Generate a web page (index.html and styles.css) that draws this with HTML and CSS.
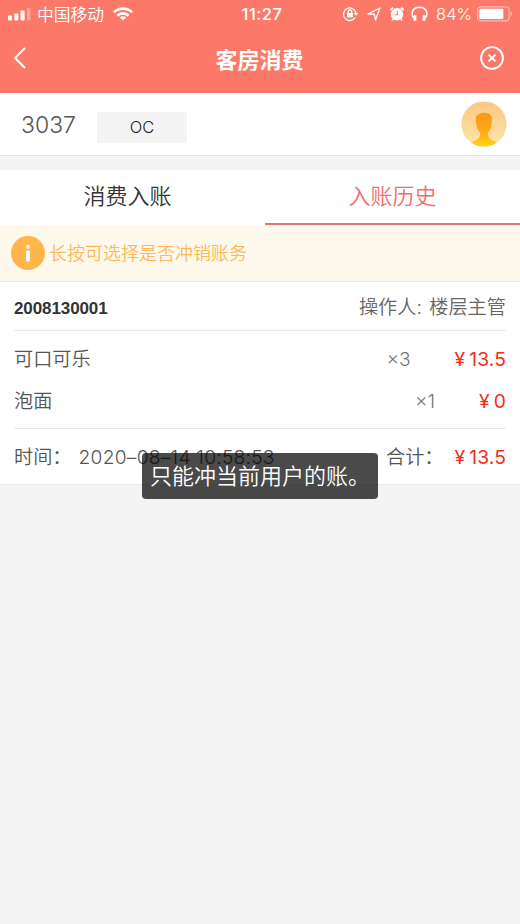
FILE: index.html
```html
<!DOCTYPE html>
<html lang="zh-CN">
<head>
<meta charset="utf-8">
<title>客房消费</title>
<link rel="stylesheet" href="styles.css">
</head>
<body>
<header class="header">
  <div class="status">
    <div class="status-left">
      <svg class="signal" width="23" height="14" viewBox="0 0 23 14" fill="#fff"><rect x="0" y="8.5" width="4" height="5" rx="1"/><rect x="6.3" y="6.5" width="4" height="7" rx="1"/><rect x="12.6" y="3.5" width="4" height="10" rx="1"/><rect x="19" y="1" width="3.5" height="12.5" rx="1" opacity=".35"/></svg>
      <span class="carrier">中国移动</span>
      <svg class="wifi" width="20" height="14" viewBox="0 0 20 14" fill="none" stroke="#fff" stroke-width="2.7"><path d="M1 5.2C6 .3 14 .3 19 5.2"/><path d="M4.4 8.7C7.5 5.7 12.5 5.7 15.6 8.7"/><path d="M10 13.6 6.8 10.5Q10 8 13.2 10.5Z" fill="#fff" stroke="none"/></svg>
    </div>
    <span class="clock">11:27</span>
    <div class="status-right">
      <svg width="17" height="16" viewBox="0 0 17 16" fill="none" stroke="#fff" stroke-width="1.3"><path d="M13.2 11.5A6.3 6.3 0 1 1 14 7"/><path d="M11.5 7h5L14 9.8Z" fill="#fff" stroke="none"/><rect x="5" y="7" width="6" height="4.4" fill="#fff" stroke="none"/><path d="M6.2 7V5.8a1.8 1.8 0 0 1 3.6 0V7"/></svg>
      <svg class="arrow" width="14" height="14" viewBox="0 0 14 14" fill="none" stroke="#fff" stroke-width="1.3" stroke-linejoin="round"><path d="M1 7 13 1 8.5 13 7.2 7.2Z"/></svg>
      <svg class="alarm" width="16" height="16" viewBox="0 0 16 16"><circle cx="8" cy="8.3" r="6.2" fill="#fff"/><path d="M1.5 4 4 1.8M14.5 4 12 1.8" stroke="#fff" stroke-width="2"/><path d="M4 12.8 3 14.5M12 12.8l1 1.7" stroke="#fff" stroke-width="1.3"/><path d="M8.3 4.8v3.9H5.3" fill="none" stroke="#fc7767" stroke-width="1.1"/></svg>
      <svg class="phones" width="17" height="16" viewBox="0 0 17 16" fill="none" stroke="#fff" stroke-width="1.5"><path d="M2.4 12C-1 5.5 3 1.3 8.5 1.3S18 5.5 14.6 12"/><path d="M4 9.2v5.5M13 9.2v5.5" stroke-width="2.8"/></svg>
      <span class="percent">84%</span>
      <svg width="36" height="16" viewBox="0 0 36 16"><rect x=".6" y=".8" width="31.5" height="14" rx="3" fill="none" stroke="#fff" stroke-opacity=".5" stroke-width="1.2"/><rect x="2.3" y="2.7" width="24" height="10.3" rx="1" fill="#fff"/><path d="M33.5 5.3q3 2.5 0 5Z" fill="#fff" opacity=".5"/></svg>
    </div>
  </div>
  <div class="nav">
    <svg class="back" width="14" height="22" viewBox="0 0 14 22" fill="none" stroke="#fff" stroke-width="2"><path d="M12 1 2 11l10 10"/></svg>
    <h1>客房消费</h1>
    <svg class="close" width="24" height="24" viewBox="0 0 24 24" fill="none" stroke="#fff"><circle cx="12" cy="12" r="10.9" stroke-width="1.9"/><path d="m8.6 8.6 6.8 6.8m0-6.8-6.8 6.8" stroke-width="2"/></svg>
  </div>
</header>

<section class="room">
  <span class="number">3037</span>
  <span class="state">OC</span>
  <svg class="avatar" width="46" height="46" viewBox="0 0 46 46">
    <defs>
      <linearGradient id="bg" x1="0" y1="0" x2="0" y2="1"><stop stop-color="#fac882"/><stop offset="1" stop-color="#fde5ad"/></linearGradient>
      <linearGradient id="person" x1="0" y1="0" x2="0" y2="1"><stop stop-color="#ff9518"/><stop offset=".6" stop-color="#ffad15"/><stop offset="1" stop-color="#ffdc17"/></linearGradient>
      <clipPath id="round"><circle cx="23" cy="23" r="22.6"/></clipPath>
    </defs>
    <circle cx="23" cy="23" r="22.6" fill="url(#bg)"/>
    <path clip-path="url(#round)" d="M15 20c-1-4 .5-6 2.500-6.500C20 11 27 11 29.500 14 31.500 16 31 20 30.500 23.500c-.3 3.500-1.500 6-3.500 8-.8 4 1.500 6.500 4 7.800 2.500 1 4 2 5 3.700V47H10v-4c1-1.700 2.500-2.700 5-3.700 2.500-1.300 5-3.800 4-7.800-2-2-4-5.500-4-11.500Z" fill="url(#person)"/>
  </svg>
</section>

<nav class="tabs">
  <span class="tab">消费入账</span>
  <span class="tab active">入账历史</span>
</nav>

<div class="notice">
  <svg width="34" height="34" viewBox="0 0 34 34"><circle cx="17" cy="17" r="17" fill="#ffb74b"/><circle cx="17" cy="10.800" r="2" fill="#fff"/><rect x="15.100" y="14.500" width="3.800" height="11" rx="1" fill="#fff"/></svg>
  <span class="notice-text">长按可选择是否冲销账务</span>
</div>

<main class="bill">
  <div class="row bill-head"><span class="order">2008130001</span><span class="operator">操作人: 楼层主管</span></div>
  <div class="items">
    <div class="row item"><span>可口可乐</span><span class="qty">×3</span><span class="price"><i>¥</i>13.5</span></div>
    <div class="row item"><span>泡面</span><span class="qty">×1</span><span class="price"><i>¥</i>0</span></div>
  </div>
  <div class="row bill-foot"><span>时间：</span><span class="time">2020–08–14 10:58:53</span><span class="sum">合计：</span><span class="price"><i>¥</i>13.5</span></div>
</main>

<div class="toast">只能冲当前用户的账。</div>
</body>
</html>
```
FILE: styles.css
```css
* { box-sizing: border-box; }
body {
  margin: 0;
  height: 924px;
  overflow: hidden;
  background: #f4f4f4;
  color: #555;
  font: 350 19.2px/28px Inter, "Noto Sans CJK SC", sans-serif;
}
svg { display: block; flex: none; }
span { white-space: nowrap; }

.header { height: 93px; background: #fc7969; color: #fff; }
.status {
  display: grid;
  grid-template-columns: 1fr auto 1fr;
  align-items: center;
  height: 28px;
  padding: 0 7px 0 8px;
}
.status-left, .status-right { display: flex; align-items: center; }
.status-right { justify-content: flex-end; }
.carrier { margin: 2px 0 0 6px; font-size: 16.8px; line-height: 26px; }
.wifi { margin-left: 9px; }
.clock { margin-left: 3px; font-size: 16.5px; font-weight: 500; letter-spacing: .5px; }
.arrow { margin-left: 8px; }
.alarm { margin-left: 8px; }
.phones { margin-left: 6px; }
.percent { margin: 0 5px 0 8px; font-size: 16.5px; }
.nav {
  display: grid;
  grid-template-columns: 1fr auto 1fr;
  align-items: center;
  height: 60px;
  padding: 0 16px 0 13px;
}
.nav h1 { margin: 3px -1px 0 1px; font-size: 22px; font-weight: 700; line-height: 32px; }
.close { justify-self: end; }

.room {
  display: flex;
  align-items: center;
  height: 63px;
  padding: 0 13px 0 21px;
  background: #fff;
  border-bottom: 1px solid #e3e3e3;
}
.number { width: 76px; padding-top: 1px; font-size: 23px; }
.state {
  width: 90px;
  height: 31px;
  margin-top: 6px;
  background: #f4f4f4;
  color: #222;
  font-size: 16.5px;
  line-height: 31px;
  text-align: center;
}
.avatar { margin-left: auto; }

.tabs {
  display: flex;
  gap: 10px;
  height: 55px;
  margin-top: 14px;
  background: #fff;
}
.tab { flex: 1; color: #333; font-size: 22px; line-height: 53px; text-align: center; }
.active { color: #ee6f6a; border-bottom: 2px solid #e27670; }

.notice {
  display: flex;
  align-items: center;
  gap: 4px;
  height: 57px;
  padding-left: 11px;
  background: #fff8ec;
  border-bottom: 1px solid #eee7de;
  color: #fbb95a;
  font-size: 18px;
}
.notice-text { padding-top: 2px; }

.bill { height: 203px; padding: 0 14px; background: #fff; border-bottom: 1px solid #e8e8e8; }
.row { display: flex; align-items: center; }
.bill-head { justify-content: space-between; height: 49px; border-bottom: 1px solid #e8e8e8; }
.order { margin-top: 5px; color: #333; font: 700 17px/24px "Liberation Sans", sans-serif; letter-spacing: -.1px; }
.operator { padding-top: 2px; color: #666; word-spacing: 2px; }
.items { height: 98px; padding-top: 7px; border-bottom: 1px solid #e8e8e8; }
.item { height: 42px; }
.qty { margin-left: auto; color: #777; }
.price { display: flex; margin-left: 44px; color: #f52c1a; font-weight: 375; letter-spacing: .15px; }
.price i { margin-right: 4px; font-style: normal; }
.bill-foot { height: 55px; }
.time { margin-left: 7px; letter-spacing: .25px; }
.sum { margin-left: auto; }
.bill-foot .price { margin-left: 11px; }

.toast {
  position: absolute;
  top: 453px;
  left: 142px;
  width: 236px;
  height: 46px;
  padding-left: 8px;
  border-radius: 4px;
  background: rgba(0, 0, 0, .71);
  color: #fff;
  font-size: 22px;
  line-height: 47px;
  white-space: nowrap;
}
```
